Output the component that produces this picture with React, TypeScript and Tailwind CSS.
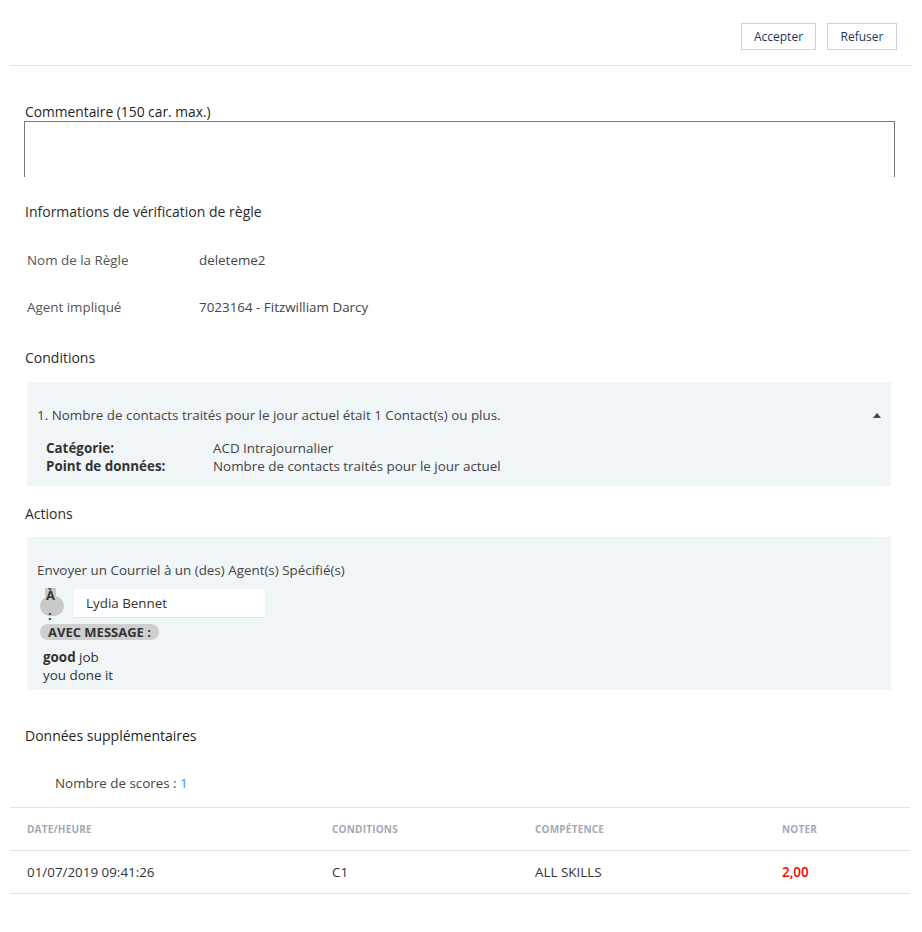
export default function App() {
  return (
    <div className="w-[922px] min-h-[932px] bg-white text-[13.4px] text-[#333] font-['Open_Sans',_'Liberation_Sans',_sans-serif]">
      {/* Top actions */}
      <div className="mx-[10px] h-[66px] border-b border-[#e1e5ea] flex justify-end items-start pt-[23px] pr-[15px] gap-[11px]">
        <button className="h-[27px] w-[75px] border border-[#c9d2dc] bg-white text-[12px] text-[#1a3656]">Accepter</button>
        <button className="h-[27px] w-[70px] border border-[#c9d2dc] bg-white text-[12px] text-[#1a3656]">Refuser</button>
      </div>

      <div className="pl-[25px] pr-[28px]">
        {/* Comment */}
        <div className="mt-[38px] text-[13.8px] leading-[16px] text-[#1f1f1f]">Commentaire (150 car. max.)</div>
        <div className="ml-[-1px] mt-[1px] h-[56px] w-[871px] border-t border-x border-[#777]" />

        {/* Rule info */}
        <div className="mt-[25px] text-[14px] leading-[20px] text-[#2b2b2b]">Informations de vérification de règle</div>
        <div className="mt-[28px] flex h-[20px] items-center pl-[2px] text-[#555]">
          <span className="w-[172px]">Nom de la Règle</span>
          <span className="text-[#444]">deleteme2</span>
        </div>
        <div className="mt-[27px] flex h-[20px] items-center pl-[2px] text-[#555]">
          <span className="w-[172px]">Agent impliqué</span>
          <span className="text-[#444]">7023164 - Fitzwilliam Darcy</span>
        </div>

        {/* Conditions */}
        <div className="mt-[31px] text-[14px] leading-[20px] text-[#2b2b2b]">Conditions</div>
        <div className="ml-[2px] mt-[14px] w-[864px] h-[104px] bg-[#f0f5f8] pt-[24px] pl-[10px] pr-[9px]">
          <div className="flex items-center justify-between h-[18px]">
            <span className="text-[#444]">1. Nombre de contacts traités pour le jour actuel était 1 Contact(s) ou plus.</span>
            <svg width="8" height="5" viewBox="0 0 8 5" className="mr-[1px]"><path d="M4 0L8 5H0Z" fill="#444" /></svg>
          </div>
          <div className="mt-[15px] pl-[9px] leading-[18px]">
            <div className="flex">
              <span className="w-[167px] font-bold text-[#333]">Catégorie:</span>
              <span className="text-[#444]">ACD Intrajournalier</span>
            </div>
            <div className="flex">
              <span className="w-[167px] font-bold text-[#333]">Point de données:</span>
              <span className="text-[#444]">Nombre de contacts traités pour le jour actuel</span>
            </div>
          </div>
        </div>

        {/* Actions */}
        <div className="mt-[18px] text-[14px] leading-[20px] text-[#2b2b2b]">Actions</div>
        <div className="ml-[2px] mt-[13px] w-[864px] h-[153px] bg-[#f0f5f8] pt-[24px] pl-[10px]">
          <div className="h-[18px] leading-[18px] text-[#444]">Envoyer un Courriel à un (des) Agent(s) Spécifié(s)</div>
          <div className="mt-[9px] flex items-start">
            <div className="relative ml-[3px] w-[24px] h-[32px] text-[13px] font-bold leading-[14px]">
              <div className="absolute left-0 top-[8px] h-[20px] w-[24px] rounded-full bg-[#c9c9c9]" />
              <span className="absolute left-[5px] top-0 bg-[#c9c9c9] px-[1px]">À</span>
              <span className="absolute left-[8px] top-[20px]">:</span>
            </div>
            <div className="ml-[10px] mt-[1px] h-[29px] w-[191px] bg-white border-b border-[#dfe5ea] pl-[12px] leading-[28px] text-[#333]">Lydia Bennet</div>
          </div>
          <div className="mt-[4px] ml-[3px] inline-block rounded-full bg-[#cfcfcf] px-[8px] h-[16px] leading-[16px] text-[13px] font-bold text-[#333]">AVEC MESSAGE :</div>
          <div className="mt-[6px] ml-[6px] leading-[18px] text-[#333]">
            <div><span className="font-bold">good</span> job</div>
            <div>you done it</div>
          </div>
        </div>

        {/* Extra data */}
        <div className="mt-[36px] text-[14px] leading-[20px] text-[#1f1f1f]">Données supplémentaires</div>
        <div className="mt-[27px] pl-[30px] leading-[20px] text-[#444]">
          Nombre de scores : <span className="text-[#3d8fd6]">1</span>
        </div>
      </div>

      {/* Scores table */}
      <div className="mx-[10px] mt-[14px] w-[900px] border-t border-[#dfe4ea]">
        <div className="flex h-[43px] items-center border-b border-[#dfe4ea] text-[10px] font-bold uppercase text-[#a2a9b4] tracking-[0.2px]">
          <div className="w-[302px] pl-[17px]">Date/Heure</div>
          <div className="w-[203px] pl-[20px]">Conditions</div>
          <div className="w-[247px] pl-[20px]">Compétence</div>
          <div className="flex-1 pl-[20px]">Noter</div>
        </div>
        <div className="flex h-[43px] items-center border-b border-[#dfe4ea] text-[#333]">
          <div className="w-[302px] pl-[17px]">01/07/2019 09:41:26</div>
          <div className="w-[203px] pl-[20px]">C1</div>
          <div className="w-[247px] pl-[20px]">ALL SKILLS</div>
          <div className="flex-1 pl-[20px] font-semibold text-[#ff0000]">2,00</div>
        </div>
      </div>
    </div>
  );
}
